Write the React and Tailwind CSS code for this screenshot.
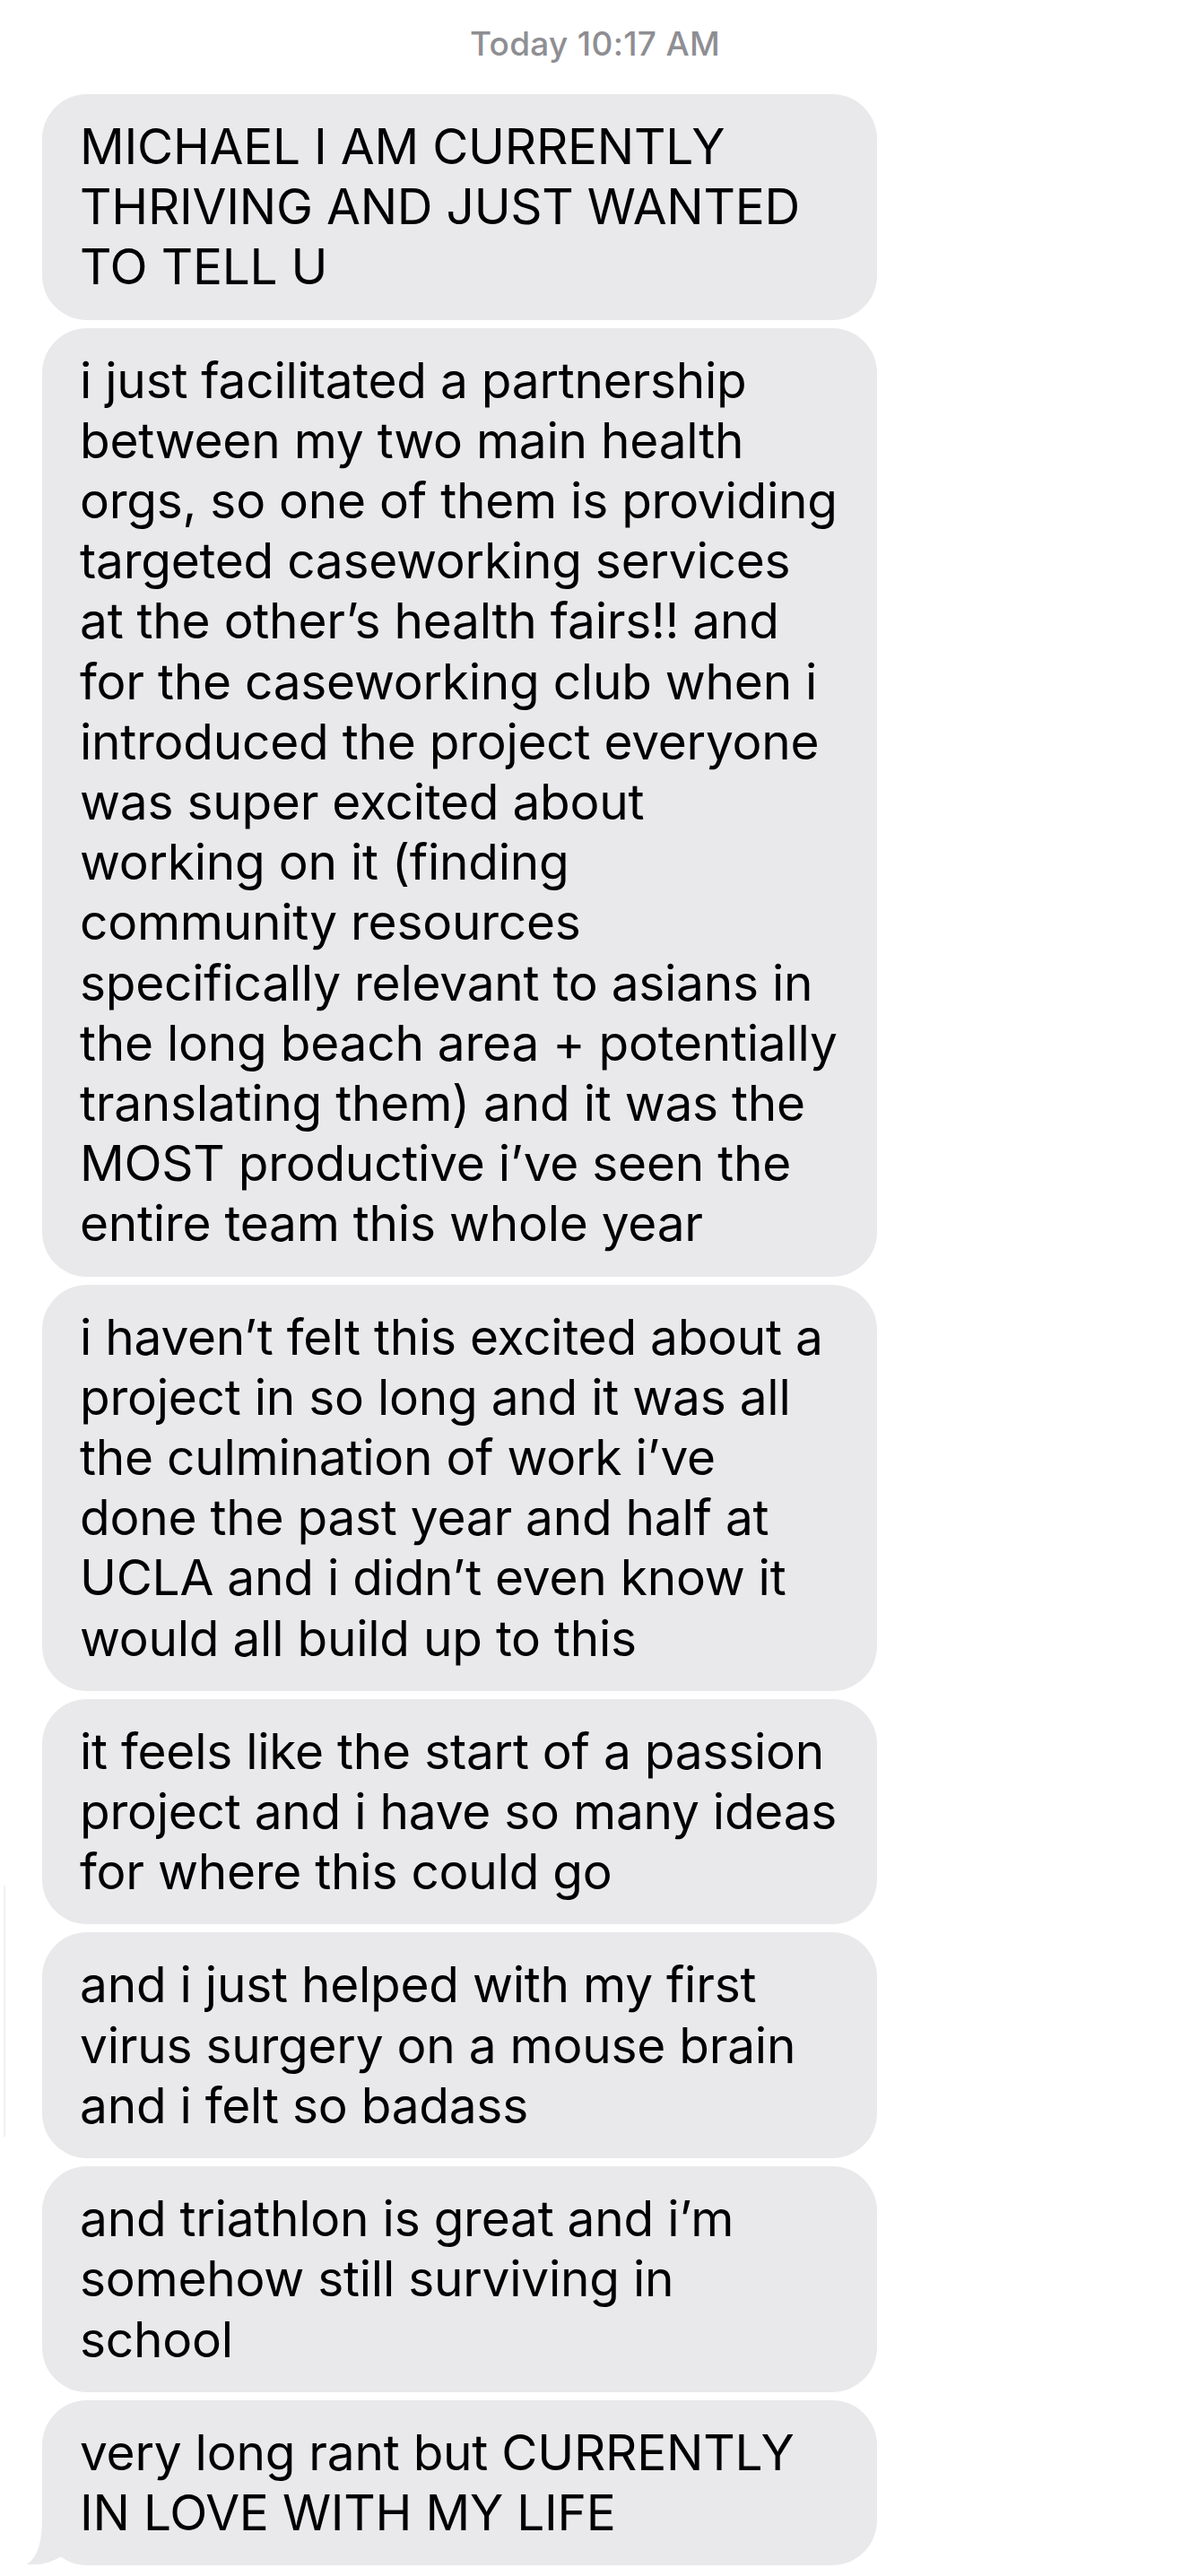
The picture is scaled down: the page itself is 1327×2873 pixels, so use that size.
const messages = [
  ["MICHAEL I AM CURRENTLY", "THRIVING AND JUST WANTED", "TO TELL U"],
  [
    "i just facilitated a partnership",
    "between my two main health",
    "orgs, so one of them is providing",
    "targeted caseworking services",
    "at the other\u2019s health fairs!! and",
    "for the caseworking club when i",
    "introduced the project everyone",
    "was super excited about",
    "working on it (finding",
    "community resources",
    "specifically relevant to asians in",
    "the long beach area + potentially",
    "translating them) and it was the",
    "MOST productive i\u2019ve seen the",
    "entire team this whole year",
  ],
  [
    "i haven\u2019t felt this excited about a",
    "project in so long and it was all",
    "the culmination of work i\u2019ve",
    "done the past year and half at",
    "UCLA and i didn\u2019t even know it",
    "would all build up to this",
  ],
  ["it feels like the start of a passion", "project and i have so many ideas", "for where this could go"],
  ["and i just helped with my first", "virus surgery on a mouse brain", "and i felt so badass"],
  ["and triathlon is great and i\u2019m", "somehow still surviving in", "school"],
  ["very long rant but CURRENTLY", "IN LOVE WITH MY LIFE"],
];

// received bubble, fixed width like the screenshot
function Bubble({ lines, tail }) {
  return (
    <div className="relative w-[931px] rounded-[50px] bg-[#e9e9eb] pl-[42px] pr-6 py-[25px]">
      {tail && (
        <svg className="absolute -left-[18px] bottom-0" width="90" height="60" viewBox="0 0 90 60">
          <path d="M18 0 L18 8 Q18 48 1 59 Q24 61 41 49 Q52 60 70 60 L90 60 L90 0 Z" fill="#e9e9eb" />
        </svg>
      )}
      <div className="relative">
        {lines.map((l, i) => (
          <div key={i} className="whitespace-pre text-[55px] leading-[67.2px] tracking-[-0.25px] text-black">
            {l}
          </div>
        ))}
      </div>
    </div>
  );
}

export default function App() {
  return (
    <div className="relative min-h-[2873px] w-[1327px] bg-white font-['Inter','Liberation_Sans',sans-serif]">
      <div className="absolute left-[4px] top-[2103px] h-[280px] w-[2px] bg-[#f1f1f3]" />
      <div className="pt-[26px] text-center text-[37px] font-medium leading-[46px] tracking-[0.3px] text-[#8e8e93]">
        Today 10:17 AM
      </div>
      <div className="mt-[33px] flex flex-col gap-[9px] pl-[47px]">
        {messages.map((m, i) => (
          <Bubble key={i} lines={m} tail={i === messages.length - 1} />
        ))}
      </div>
    </div>
  );
}
